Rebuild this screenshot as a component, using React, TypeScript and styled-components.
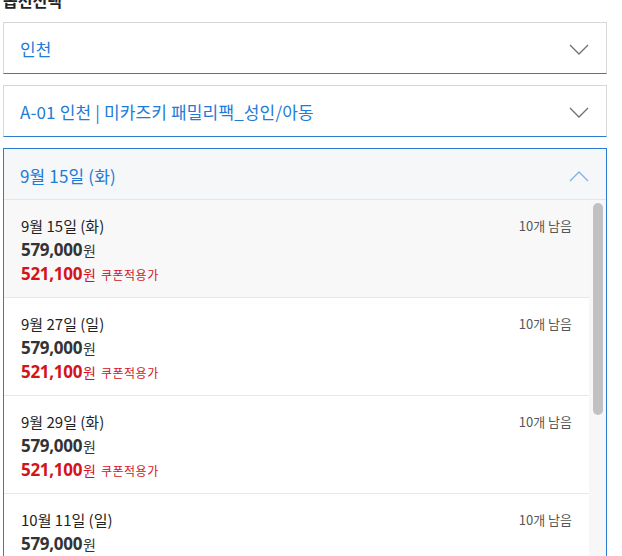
import React from "react";
import styled, { createGlobalStyle } from "styled-components";

const GlobalStyle = createGlobalStyle`
  html, body { margin: 0; padding: 0; background: #fff; overflow: hidden; }
  body { font-family: "Noto Sans CJK KR", "Noto Sans", sans-serif; }
  * { box-sizing: border-box; }
`;

const BLUE = "#2a7dd0";
const TEXT_BLUE = "#1e7bd6";

const Page = styled.div`
  margin-top: -12px;
  padding: 0 15px 0 3px;
  display: flex;
  flex-direction: column;
`;

const Title = styled.h2`
  margin: 0 0 10px;
  font-size: 16px;
  line-height: 24px;
  font-weight: 700;
  color: #222;
`;

const Select = styled.div<{ $open?: boolean }>`
  border: 1px solid ${(p) => (p.$open ? BLUE : "#d7d7d7")};
  border-bottom-color: ${BLUE};
  background: #fff;
  margin-bottom: ${(p) => (p.$open ? "0" : "11px")};
  display: flex;
  flex-direction: column;
`;

const Head = styled.div<{ $open?: boolean }>`
  height: ${(p) => (p.$open ? "51px" : "50px")};
  display: flex;
  align-items: center;
  justify-content: space-between;
  padding: ${(p) => (p.$open ? "3px" : "0")} 17px 0 16px;
  background: ${(p) => (p.$open ? "#f5f7f9" : "#fff")};
  border-bottom: ${(p) => (p.$open ? "1px solid #e4e7ea" : "none")};
`;

const HeadText = styled.span`
  font-size: 17px;
  color: ${TEXT_BLUE};
  letter-spacing: 0.15px;
`;

const Chevron = ({ up }: { up?: boolean }) => (
  <svg width="20" height="12" viewBox="0 0 20 12" style={{ marginTop: up ? 0 : 4 }}>
    <polyline
      points={up ? "1,11 10,2 19,11" : "1,1 10,10 19,1"}
      fill="none"
      stroke={up ? "#7fb3e6" : "#707070"}
      strokeWidth="1.3"
    />
  </svg>
);

const ListWrap = styled.div`
  display: grid;
  grid-template-columns: 1fr 17px;
  height: 420px;
  overflow: hidden;
`;

const Items = styled.div`
  display: flex;
  flex-direction: column;
`;

const Item = styled.div<{ $active?: boolean }>`
  height: 98px;
  flex: none;
  padding: 15px 17px 0 17px;
  background: ${(p) => (p.$active ? "#f8f8f8" : "#fff")};
  border-bottom: 1px solid #e8e8e8;
  display: flex;
  flex-direction: column;
`;

const TopRow = styled.div`
  display: flex;
  justify-content: space-between;
  align-items: center;
  height: 21px;
`;

const DateText = styled.span`
  font-size: 15px;
  color: #222;
`;

const Stock = styled.span`
  font-size: 13px;
  color: #555;
`;

const PriceRow = styled.div<{ $red?: boolean }>`
  display: flex;
  align-items: baseline;
  height: ${(p) => (p.$red ? "22px" : "24px")};
  margin-top: ${(p) => (p.$red ? "0" : "2px")};
  color: ${(p) => (p.$red ? "#d3141d" : "#333")};
`;

const Amount = styled.span`
  font-family: "Open Sans", "Noto Sans", sans-serif;
  font-weight: 700;
  font-size: 17px;
  letter-spacing: -0.3px;
`;

const Won = styled.span`
  font-size: 14px;
  margin-left: 1px;
`;

const Coupon = styled.span`
  font-size: 12px;
  margin-left: 5px;
  letter-spacing: 0.5px;
`;

const Track = styled.div`
  background: #f7f7f7;
  padding: 3px 3px 0 4px;
`;

const Thumb = styled.div`
  height: 212px;
  background: #c1c1c1;
  border-radius: 5px;
`;

const dates = [
  "9월 15일 (화)",
  "9월 27일 (일)",
  "9월 29일 (화)",
  "10월 11일 (일)",
  "10월 18일 (일)",
];

export default function App() {
  return (
    <>
      <GlobalStyle />
      <Page>
        <Title>옵션선택</Title>
        <Select>
          <Head>
            <HeadText>인천</HeadText>
            <Chevron />
          </Head>
        </Select>
        <Select>
          <Head>
            <HeadText>A-01 인천 | 미카즈키 패밀리팩_성인/아동</HeadText>
            <Chevron />
          </Head>
        </Select>
        <Select $open>
          <Head $open>
            <HeadText>9월 15일 (화)</HeadText>
            <Chevron up />
          </Head>
          <ListWrap>
            <Items>
              {dates.map((d, i) => (
                <Item key={d} $active={i === 0}>
                  <TopRow>
                    <DateText>{d}</DateText>
                    <Stock>10개 남음</Stock>
                  </TopRow>
                  <PriceRow>
                    <Amount>579,000</Amount>
                    <Won>원</Won>
                  </PriceRow>
                  <PriceRow $red>
                    <Amount>521,100</Amount>
                    <Won>원</Won>
                    <Coupon>쿠폰적용가</Coupon>
                  </PriceRow>
                </Item>
              ))}
            </Items>
            <Track>
              <Thumb />
            </Track>
          </ListWrap>
        </Select>
      </Page>
    </>
  );
}
